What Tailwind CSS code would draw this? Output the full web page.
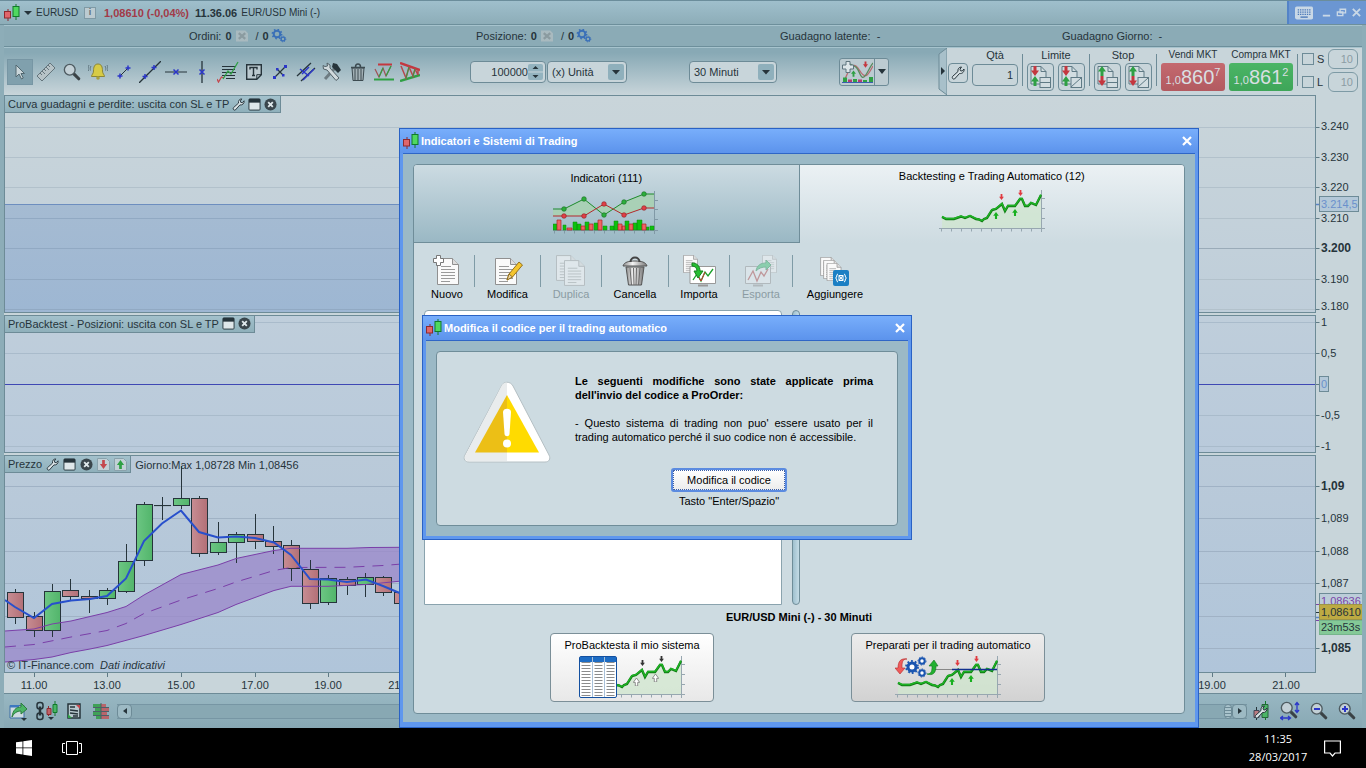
<!DOCTYPE html>
<html lang="it">
<head>
<meta charset="utf-8">
<title>EURUSD - ProOrder</title>
<script src="https://cdn.jsdelivr.net/npm/@tailwindcss/browser@4"></script>
</head>
<body class="h-screen overflow-hidden flex flex-col bg-black font-['Liberation_Sans',Arial,sans-serif] text-[11px] leading-[14px] text-[#26343b]">

<svg width="0" height="0" class="absolute" aria-hidden="true">
  <defs>
    <linearGradient id="gGreen" x1="0" x2="1"><stop offset="0" stop-color="#6cc683"/><stop offset="1" stop-color="#52b56b"/></linearGradient>
    <linearGradient id="gRed" x1="0" x2="1"><stop offset="0" stop-color="#c78d93"/><stop offset="1" stop-color="#b37077"/></linearGradient>
    <linearGradient id="gArea" x1="0" x2="0" y1="0" y2="1"><stop offset="0" stop-color="#a5bbd2"/><stop offset="1" stop-color="#9cb6d3"/></linearGradient>
    <linearGradient id="gCan" x1="0" x2="1"><stop offset="0" stop-color="#8a8a8a"/><stop offset=".4" stop-color="#f4f4f4"/><stop offset="1" stop-color="#777"/></linearGradient>
    <symbol id="candles" viewBox="0 0 16 18"><path d="M4 5v12" stroke="#8d2a30"/><rect x=".5" y="7.500" width="6" height="6.500" fill="#e0666b" stroke="#8d2a30"/><path d="M12 0v16" stroke="#117a2a"/><rect x="9" y="2.500" width="6" height="10" fill="#4fd85f" stroke="#117a2a"/></symbol>
    <symbol id="wrench" viewBox="0 0 14 14"><path d="M1.500 10.500 7 5.500C6.500 3 8 1 10.500 1L9 3.200l.5 1.600 1.800.2L13 3c.5 2.500-1.500 5-4.500 4.500L3.500 13C2 13.500.7 12 1.500 10.500z" fill="#d9e2e5" stroke="#26343b"/></symbol>
    <symbol id="win" viewBox="0 0 14 14"><rect x="1" y="1" width="12" height="12" rx="1" fill="#dfe7ea" stroke="#26343b"/><path d="M1 1h12v4H1z" fill="#26343b"/></symbol>
    <symbol id="closer" viewBox="0 0 14 14"><circle cx="7" cy="7" r="6.500" fill="#3a464c"/><path d="m4.500 4.500 5 5m0-5-5 5" stroke="#dfe8eb" stroke-width="2"/></symbol>
    <symbol id="gears" viewBox="0 0 15 14"><circle cx="5.500" cy="5" r="3.300" fill="none" stroke="#3a70b8" stroke-width="2"/><circle cx="5.500" cy="5" r="4.600" fill="none" stroke="#3a70b8" stroke-width="1.600" stroke-dasharray="1.600 2"/><circle cx="11.500" cy="10" r="1.900" fill="none" stroke="#3a70b8" stroke-width="1.400"/><circle cx="11.500" cy="10" r="2.800" fill="none" stroke="#3a70b8" stroke-dasharray="1.100 1.100"/></symbol>
    <symbol id="nox" viewBox="0 0 13 12"><path d="M0 0h10l3 3v9H0z" fill="#a9babf"/><path d="m3 3 7 6m0-6-7 6" stroke="#8b9ba0" stroke-width="2.500"/></symbol>
    <symbol id="aDown" viewBox="0 0 8 10"><path d="M2.500 0h3v4.500H8L4 10 0 4.500h2.500z"/></symbol>
    <symbol id="aUp" viewBox="0 0 8 10"><path d="M2.500 10h3V5.500H8L4 0 0 5.500h2.500z"/></symbol>
    <symbol id="doc" viewBox="0 0 22 27"><path d="M.5.500h15l6 6v20H.5z" fill="#fafafa" stroke="#909090"/><path d="M15.500.500v6h6" fill="#ddd" stroke="#909090"/><path d="M4 8.500h10M4 11.500h14M4 14.500h14M4 17.500h14M4 20.500h14M4 23.500h9" stroke="#9a9a9a"/></symbol>
    <symbol id="equity" viewBox="0 0 106 42">
      <path d="M3 27 7 29 15 29 22 26.500 26 28 31 26 37 29 40 29.500 43 31 45 29 48 28 53 20 57 19 63 14 66 21 69 16 76 16 81 9 83 9 86 16 89 16 92 13 97 15 102 5V38H3z" fill="#cfe5cd" opacity=".75"/>
      <path d="M0 38.500h106M102.500 0v42M2.500 38v3.500M12.500 38v3.500M22.500 38v3.500M32.500 38v3.500M42.500 38v3.500M52.500 38v3.500M62.500 38v3.500M72.500 38v3.500M82.500 38v3.500M92.500 38v3.500M102 8.500h4M102 18.500h4M102 28.500h4" stroke="#97a7b0" fill="none"/>
      <path d="M3 27 7 29 15 29 22 26.500 26 28 31 26 37 29 40 29.500 43 31 45 29 48 28 53 20 57 19 63 14 66 21 69 16 76 16 81 9 83 9 86 16 89 16 92 13 97 15 102 5" fill="none" stroke="#117a14" stroke-width="2.400"/>
      <path d="M3 26.500 7 28.500 15 28.500 22 26 26 27.500 31 25.500 37 28.500 43 30.500 48 27.500 53 19.500 57 18.500 63 13.500 66 20.500 69 15.500 76 15.500 81 8.500 83 8.500 86 15.500 89 15.500 92 12.500 97 14.500 102 4.500" fill="none" stroke="#1db324" stroke-width="1.400"/>
    </symbol>
    <symbol id="mag" viewBox="0 0 20 20"><path d="m11.500 11.500 6 6" stroke="#3a4246" stroke-width="3.500" stroke-linecap="round"/><circle cx="7.500" cy="7.500" r="6" fill="#c3d0d6" stroke="#4e5b61" stroke-width="1.500"/></symbol>
    <symbol id="pageL" viewBox="0 0 21 22"><path d="M1 .5h10l5 5V18H1z" fill="#d2dde1" stroke="#5f7a85"/><path d="M11 .5v5h5" fill="none" stroke="#5f7a85"/><rect x="10" y="11.500" width="10.500" height="10" fill="#d2dde1" stroke="#5f7a85"/></symbol>
  </defs>
</svg>

<main class="flex-1 min-h-0 flex flex-col bg-[#8dadb8] border-t border-[#6b8d9b]">

  <header class="h-6 shrink-0 flex items-center pl-1 bg-linear-to-b from-[#9fbfcc] to-[#8dadb8] border-b border-[#6d8f9b]">
    <svg class="w-4 h-[18px] mr-1" aria-hidden="true"><use href="#candles"/></svg>
    <svg class="w-2 h-1 mr-1 shrink-0" viewBox="0 0 8 4" aria-hidden="true"><path d="M0 0h8L4 4z" fill="#26343b"/></svg>
    <span class="text-[10px] w-12 shrink-0">EURUSD</span>
    <button class="w-3 h-3 mr-2 bg-[#bccbd1] border border-[#7f9aa5] text-[9px] leading-[9px] font-bold text-[#5d7079]" aria-label="Informazioni">i</button>
    <span class="font-bold text-[#a23a48] mr-1.5">1,08610 (-0,04%)</span>
    <span class="font-bold mr-1">11.36.06</span>
    <span class="text-[10px]">EUR/USD Mini (-)</span>
    <div class="ml-auto self-stretch w-[79px] flex items-center gap-1 pl-1.5 pr-1 bg-[#6b96d2] border-l-2 border-[#5383c8]">
      <svg class="w-5 h-[14px] mr-1" viewBox="0 0 20 14" role="img" aria-label="Tastiera"><rect width="20" height="14" rx="2" fill="#c9d8e6"/><path d="M3 3.500h14M3 6h14M3 8.500h14" stroke="#4b78b8" stroke-width="1.500" stroke-dasharray="1.500 1"/><path d="M6 11.500h8" stroke="#4b78b8" stroke-width="1.500"/></svg>
      <button class="w-3 h-3" aria-label="Riduci"><svg viewBox="0 0 12 12"><path d="M2 9.500h8" stroke="#c9d8e6" stroke-width="2"/></svg></button>
      <button class="w-3 h-3" aria-label="Ripristina"><svg viewBox="0 0 12 12"><path d="M4.500 2.500h6v4h-6zM1.500 5.500h6v4h-6z" fill="#6b96d2" stroke="#c9d8e6" stroke-width="1.500"/></svg></button>
      <button class="w-3 h-3" aria-label="Chiudi"><svg viewBox="0 0 12 12"><path d="m2 2 8 8m0-8-8 8" stroke="#c9d8e6" stroke-width="2"/></svg></button>
    </div>
  </header>

  <section class="h-[22px] shrink-0 mx-1 pl-[185px] grid grid-cols-[287fr_304fr_282fr_300fr] items-center bg-[#8babb6] border-t border-[#a6c3cd] border-b border-b-[#6d8f9b]">
    <div class="flex items-center">Ordini: <b class="ml-1 mr-1">0</b><svg class="w-3 h-3" aria-hidden="true"><use href="#nox"/></svg><span class="ml-2">/</span><b class="ml-1">0</b><svg class="w-4 h-[14px] ml-0.5" aria-hidden="true"><use href="#gears"/></svg></div>
    <div class="flex items-center">Posizione: <b class="ml-1 mr-1">0</b><svg class="w-3 h-3" aria-hidden="true"><use href="#nox"/></svg><span class="ml-2">/</span><b class="ml-1">0</b><svg class="w-4 h-[14px] ml-0.5" aria-hidden="true"><use href="#gears"/></svg></div>
    <div>Guadagno latente:&nbsp; -</div>
    <div>Guadagno Giorno:&nbsp; -</div>
  </section>

  <section class="h-12 shrink-0 mx-1 flex items-center pl-[3px] bg-linear-to-b from-[#88a9b5] from-10% to-[#c8d5da] border-t border-[#a6c3cd]">
    <div class="flex">
      <button class="w-[26px] h-[26px] grid place-items-center bg-[#80a0ad] border border-[#7796a4]" aria-label="Puntatore"><svg width="12" height="18" viewBox="0 0 12 18"><path d="M2 2v12l3-3 2.500 5 1.800-1L7 10.500h3.500z" fill="#cad6da" stroke="#526870"/></svg></button>
      <button class="w-[26px] h-[26px] grid place-items-center" aria-label="Righello"><svg width="20" height="20" viewBox="0 0 20 20"><path d="m1 14 13-13 5 5L6 19z" fill="#b7c3c7" stroke="#64757c"/><path d="m4 11 2 2m0-4 3 3m-1-5 2 2m0-4 3 3m-1-5 2 2" stroke="#64757c"/></svg></button>
      <button class="w-[26px] h-[26px] grid place-items-center" aria-label="Zoom"><svg width="18" height="18"><use href="#mag"/></svg></button>
      <button class="w-[26px] h-[26px] grid place-items-center" aria-label="Allarme"><svg width="20" height="18" viewBox="0 0 20 18"><path d="M10 1c3.500 0 4.500 3 4.500 7 0 3 2 3.500 2 5.500H3.500c0-2 2-2.500 2-5.500 0-4 1-7 4.500-7z" fill="#d7cb45" stroke="#8c8636"/><circle cx="10" cy="15" r="1.800" fill="#a8a03c"/><path d="M3 3C2 4.500 2 6 2.500 7.500M1 2C-.2 4 0 6.500.5 8M17 3c1 1.500 1 3 .5 4.500M19 2c1.200 2 1 4.500.5 6" fill="none" stroke="#5f757e"/></svg></button>
      <button class="w-[26px] h-[26px] grid place-items-center" aria-label="Segmento"><svg width="14" height="14" viewBox="0 0 14 14"><path d="M3 11 11 3" stroke="#26343b"/><path d="M3 8.500v5M.5 11h5M11 .5v5M8.500 3h5" stroke="#2b36c9" stroke-width="1.500"/></svg></button>
      <button class="w-[26px] h-[26px] grid place-items-center" aria-label="Retta"><svg width="22" height="22" viewBox="0 0 22 22"><path d="M0 22 22 0" stroke="#26343b" stroke-width="1.300"/><path d="M6 13v5M3.500 15.500h5M15 4v5M12.500 6.500h5" stroke="#2b36c9" stroke-width="1.500"/></svg></button>
      <button class="w-[26px] h-[26px] grid place-items-center" aria-label="Orizzontale"><svg width="22" height="8" viewBox="0 0 22 8"><path d="M0 4h22" stroke="#26343b"/><path d="m8.500 1.500 5 5m0-5-5 5" stroke="#2b36c9" stroke-width="1.500"/></svg></button>
      <button class="w-[26px] h-[26px] grid place-items-center" aria-label="Verticale"><svg width="8" height="22" viewBox="0 0 8 22"><path d="M4 0v22" stroke="#26343b" stroke-width="1.300"/><path d="m1.500 8.500 5 5m0-5-5 5" stroke="#2b36c9" stroke-width="1.500"/></svg></button>
      <button class="w-[26px] h-[26px] grid place-items-center" aria-label="Fibonacci"><svg width="22" height="22" viewBox="0 0 22 22"><path d="M5 5.500h14M5 8.500h13M5 11.500h14M5 14.500h13M9 17.500h9" stroke="#26343b"/><path d="M0 18l1.500 3 3-5 2.500 1" fill="none" stroke="#c4474d" stroke-width="1.300"/><path d="M6 18l5-8 3 3 7-12" fill="none" stroke="#2fa044" stroke-width="1.300"/></svg></button>
      <button class="w-[26px] h-[26px] grid place-items-center" aria-label="Testo"><svg width="16" height="16" viewBox="0 0 16 16"><path d="M.7.700h14.600v10l-4.500 4.600H.7z" fill="#bccad0" stroke="#26343b" stroke-width="1.400"/><path d="M10.800 15v-4.300H15" fill="none" stroke="#26343b"/><path d="M4 5.500v-2h7v2M7.500 3.500v8M6 11.500h3" fill="none" stroke="#26343b" stroke-width="1.400"/></svg></button>
      <button class="w-[26px] h-[26px] grid place-items-center" aria-label="Sposta"><svg width="14" height="14" viewBox="0 0 14 14"><path d="M2 12 12 2M4 4l6 6" stroke="#26343b" stroke-width="1.200"/><path d="M0 11h3v3H0zM11 0h3v3h-3zM9 9h2.500v2.500H9zM3 3h2.500v2.500H3z" fill="#2b36c9"/></svg></button>
      <button class="w-[26px] h-[26px] grid place-items-center" aria-label="Parallele"><svg width="20" height="20" viewBox="0 0 20 20"><path d="M1 14 15 1M5 19 19 6" stroke="#26343b" stroke-width="1.300"/><path d="m4 7 9 7M13 5l-7 7M7 18l11-11" stroke="#2b36c9" stroke-width="1.500"/></svg></button>
      <button class="w-[26px] h-[26px] grid place-items-center" aria-label="Strumenti"><svg width="20" height="20" viewBox="0 0 20 20"><path d="m3 17 10-11" stroke="#6e7c82" stroke-width="3"/><path d="m11 1 4 1 4 6-3 3-6-6z" fill="#26343b"/><path d="M5 1 5.500 4 3 4.500 1 3.500 1.500 7 5 8l9 10.500 3-2.500L8 6V3z" fill="#d0d9dc" stroke="#526168"/></svg></button>
      <button class="w-[26px] h-[26px] grid place-items-center" aria-label="Elimina"><svg width="16" height="18" viewBox="0 0 16 18"><path d="M2 5h12l-1 12.500H3z" fill="#a3b1b6" stroke="#3d4b51"/><path d="M5 6v11M8 6v11M11 6v11" stroke="#3d4b51"/><path d="M1 4.500h14M5.500 4c0-4 5-4 5 0" fill="none" stroke="#3d4b51" stroke-width="1.500"/></svg></button>
      <button class="w-[26px] h-[26px] grid place-items-center" aria-label="Supporti"><svg width="20" height="18" viewBox="0 0 20 18"><path d="M4 1.500h14" stroke="#c4373f" stroke-width="2"/><path d="M0 16.500h20" stroke="#2fa044" stroke-width="2"/><path d="m1 6 4 8 4-9 3 8 5-10" fill="none" stroke="#a05055" stroke-width="1.200"/><path d="m5 14 4-9M12 13l5-10" stroke="#2fa044" stroke-width="1.200"/></svg></button>
      <button class="w-[26px] h-[26px] grid place-items-center" aria-label="Triangolo"><svg width="20" height="20" viewBox="0 0 20 20"><path d="m0 1 20 7" stroke="#c4373f" stroke-width="2.500"/><path d="m0 19 20-6" stroke="#2fa044" stroke-width="2.500"/><path d="m1 4 5 12 3-11 4 9 2-7 3 6V8" fill="none" stroke="#b4484d" stroke-width="1.500"/><path d="m6 16 3-11M13 14l2-7" stroke="#2fa044"/></svg></button>
    </div>

    <div class="ml-[47px] w-[76px] h-[22px] flex items-center rounded-sm border border-[#6d8b97] bg-[#c8d5da] pr-0.5">
      <input class="w-full min-w-0 bg-transparent text-right outline-none" value="100000" aria-label="Quantità">
      <svg class="w-[15px] h-4 shrink-0" viewBox="0 0 15 16" aria-hidden="true"><rect width="15" height="16" rx="2" fill="#93b3bf"/><path d="M0 8h15" stroke="#c8d5da"/><path d="M4.500 5h6L7.500 2zM4.500 11h6l-3 3z" fill="#26343b"/></svg>
    </div>
    <div class="w-20 h-[22px] flex items-center rounded-sm border border-[#6d8b97] bg-[#c8d5da] pl-1 pr-0.5 ml-px">
      <select class="appearance-none w-full min-w-0 bg-transparent outline-none" aria-label="Unità"><option>(x) Unità</option></select>
      <svg class="w-4 h-4 shrink-0 pointer-events-none" viewBox="0 0 16 16" aria-hidden="true"><rect width="16" height="16" rx="2" fill="#8fb0bc"/><path d="M4 6h8l-4 4.500z" fill="#26343b"/></svg>
    </div>
    <div class="ml-[62px] w-[88px] h-[22px] flex items-center rounded-sm border border-[#6d8b97] bg-[#c8d5da] pl-1 pr-0.5">
      <select class="appearance-none w-full min-w-0 bg-transparent outline-none" aria-label="Intervallo"><option>30 Minuti</option></select>
      <svg class="w-4 h-4 shrink-0 pointer-events-none" viewBox="0 0 16 16" aria-hidden="true"><rect width="16" height="16" rx="2" fill="#8fb0bc"/><path d="M4 6h8l-4 4.500z" fill="#26343b"/></svg>
    </div>
    <div class="ml-[62px] h-7 flex rounded-[3px] border border-[#6d8b97] bg-[#bccbd1]">
      <button class="w-[35px] grid place-items-center border-r border-[#6d8b97]" aria-label="Indicatori"><svg width="31" height="22" viewBox="0 0 31 22"><path d="M3 18c6-14 9-18 15-8s9 2 13-5" fill="none" stroke="#b96a70" stroke-width="1.300"/><path d="M8 3c4 3 6 0 10 10s8-5 13-11" fill="none" stroke="#5b8a5e" stroke-width="1.300"/><path d="M4 .5h4V4h3.500v4H8v3.500H4V8H.5V4H4z" fill="#dde6e9" stroke="#5f757e"/><path d="M1 16.500h4V21H1zM11 18h4v3h-4zM21 19h4v2h-4zM27 16h4v5h-4z" fill="#2fa044"/><path d="M6 18.500h4V21H6zM16 18.500h4V21h-4z" fill="#b33f73"/><path d="M0 21.500h31" stroke="#3b5fae"/><use href="#aUp" x="9" y="9" width="5" height="7" fill="#2fa044"/><use href="#aDown" x="21" y="0" width="5" height="7" fill="#c4373f"/></svg></button>
      <button class="w-[13px] grid place-items-center" aria-label="Altri indicatori"><svg width="8" height="5"><path d="M0 0h8L4 5z" fill="#26343b"/></svg></button>
    </div>

    <div class="ml-auto h-full flex">
      <svg class="w-[9px] h-full shrink-0" viewBox="0 0 9 47" preserveAspectRatio="none" aria-hidden="true"><path d="M9 0 1 6v35l8 6z" fill="#a8c0ca" stroke="#6d8b97"/><path d="m3 19 4 4-4 4z" fill="#26343b"/></svg>
      <div class="h-full flex gap-1 pl-px pr-1 bg-[#c8d5da]">
        <button class="w-5 h-5 mt-[15px] grid place-items-center rounded-sm border border-[#6d8b97]" aria-label="Impostazioni"><svg width="14" height="14"><use href="#wrench"/></svg></button>
        <label class="flex flex-col items-center">Qtà<input class="w-[46px] h-[22px] mt-0.5 px-1 rounded-sm border border-[#6d8b97] text-right" value="1"></label>
        <div class="w-px h-8 mt-1.5 bg-[#6d8b97]"></div>
        <div class="flex flex-col items-center"><span>Limite</span>
          <div class="flex gap-1">
            <button class="w-[27px] h-7 mt-px grid place-items-center rounded-sm border border-[#6d8b97]" aria-label="Limite singolo"><svg width="21" height="22"><use href="#pageL"/><path d="M10 16.500h10" stroke="#5f7a85"/><use href="#aDown" x="1" y="0" width="8" height="10" fill="#c4373f"/><use href="#aUp" x="1" y="10" width="8" height="10" fill="#2fa044"/></svg></button>
            <button class="w-[27px] h-7 mt-px grid place-items-center rounded-sm border border-[#6d8b97]" aria-label="Limite ordine"><svg width="21" height="22"><use href="#pageL"/><path d="m10 21 10-9" stroke="#5f7a85"/><use href="#aDown" x="1" y="0" width="8" height="10" fill="#c4373f"/><use href="#aUp" x="1" y="10" width="8" height="10" fill="#2fa044"/></svg></button>
          </div></div>
        <div class="w-px h-8 mt-1.5 bg-[#6d8b97]"></div>
        <div class="flex flex-col items-center"><span>Stop</span>
          <div class="flex gap-1">
            <button class="w-[27px] h-7 mt-px grid place-items-center rounded-sm border border-[#6d8b97]" aria-label="Stop singolo"><svg width="21" height="22"><use href="#pageL"/><path d="M10 16.500h10" stroke="#5f7a85"/><use href="#aUp" x="1" y="0" width="8" height="10" fill="#2fa044"/><use href="#aDown" x="1" y="10" width="8" height="10" fill="#c4373f"/></svg></button>
            <button class="w-[27px] h-7 mt-px grid place-items-center rounded-sm border border-[#6d8b97]" aria-label="Stop ordine"><svg width="21" height="22"><use href="#pageL"/><path d="m10 21 10-9" stroke="#5f7a85"/><use href="#aUp" x="1" y="0" width="8" height="10" fill="#2fa044"/><use href="#aDown" x="1" y="10" width="8" height="10" fill="#c4373f"/></svg></button>
          </div></div>
        <div class="w-px h-8 mt-1.5 bg-[#6d8b97]"></div>
        <div class="w-16 flex flex-col items-center whitespace-nowrap"><span class="text-[10px]">Vendi MKT</span>
          <button class="w-full h-7 mt-px flex justify-center items-end pb-1 rounded-[3px] bg-linear-to-b from-[#c4696f] to-[#b25a60] text-[#d9dfe2]"><span>1,0</span><span class="text-[20px] leading-5">860</span><span class="self-start pt-0.5">7</span></button></div>
        <div class="w-16 flex flex-col items-center whitespace-nowrap"><span class="text-[10px]">Compra MKT</span>
          <button class="w-full h-7 mt-px flex justify-center items-end pb-1 rounded-[3px] bg-linear-to-b from-[#4bb566] to-[#3ea558] text-[#d9dfe2]"><span>1,0</span><span class="text-[20px] leading-5">861</span><span class="self-start pt-0.5">2</span></button></div>
        <div class="w-px h-8 mt-1.5 bg-[#6d8b97]"></div>
        <div class="flex flex-col gap-[3px] pt-px">
          <div class="flex items-center gap-[3px]"><input id="stopOn" type="checkbox" class="appearance-none w-3 h-3 border border-[#6d8b97]"><label for="stopOn" class="w-2">S</label><input class="w-[30px] h-5 px-1 rounded-md border border-[#7d9aa5] text-right text-[#8b9ca4]" value="10" aria-label="Distanza stop"></div>
          <div class="flex items-center gap-[3px]"><input id="limOn" type="checkbox" class="appearance-none w-3 h-3 border border-[#6d8b97]"><label for="limOn" class="w-2">L</label><input class="w-[30px] h-5 px-1 rounded-md border border-[#7d9aa5] text-right text-[#8b9ca4]" value="10" aria-label="Distanza limite"></div>
        </div>
      </div>
    </div>
  </section>

  <section class="flex-1 min-h-0 mx-1 flex bg-[#c8d5da]">
    <div class="flex-1 min-w-0 flex flex-col gap-0.5">
      <div class="relative flex-[218] min-h-0 border border-[#6d8b97] bg-linear-to-b from-[#c9d5da] to-[#bfceda] overflow-hidden">
        <svg class="absolute inset-0 w-full h-full" aria-label="Curva guadagni">
          <path d="M0 31.500h1400M0 61.500h1400M0 91.500h1400M0 122.500h1400M0 183.500h1400M0 213.500h1400" stroke="#b2c1cb"/><path d="M0 152.500h1400" stroke="#9aabb8"/>
          <rect y="108" width="420" height="130" fill="url(#gArea)"/><path d="M0 108.500h420" stroke="#6d8ebf"/>
          <path d="M0 122.500h420M0 152.500h420M0 183.500h420M0 213.500h420" stroke="#91a9c3"/>
        </svg>
        <div class="relative w-fit h-[17px] flex items-center gap-[3px] pl-[3px] pr-[3px] bg-linear-to-b from-[#a3c1cc] to-[#8fb0bb] border-r border-b border-[#6d8b97]">Curva guadagni e perdite: uscita con SL e TP
          <svg class="w-[13px] h-[13px]"><use href="#wrench"/></svg><svg class="w-[13px] h-[13px]"><use href="#win"/></svg><svg class="w-[13px] h-[13px]"><use href="#closer"/></svg></div>
      </div>
      <div class="relative flex-[138] min-h-0 border border-[#6d8b97] bg-linear-to-b from-[#bfcedb] to-[#b9cadb] overflow-hidden">
        <svg class="absolute inset-0 w-full h-full" aria-label="Posizioni"><path d="M0 6.500h1400M0 37.500h1400M0 99.500h1400M0 130.500h1400" stroke="#a9bbcb"/><path d="M0 68.500h1400" stroke="#3f48b4"/></svg>
        <div class="relative w-fit h-[17px] flex items-center gap-[3px] pl-[3px] pr-[3px] bg-linear-to-b from-[#a3c1cc] to-[#8fb0bb] border-r border-b border-[#6d8b97]">ProBacktest - Posizioni: uscita con SL e TP
          <svg class="w-[13px] h-[13px]"><use href="#win"/></svg><svg class="w-[13px] h-[13px]"><use href="#closer"/></svg></div>
      </div>
      <div class="relative flex-[218] min-h-0 border border-[#6d8b97] bg-linear-to-b from-[#bacad9] to-[#b0c5da] overflow-hidden">
        <svg class="absolute inset-0 w-full h-full" aria-label="Prezzo">
          <path d="M0 30.500h1400M0 62.500h1400M0 95.500h1400M0 127.500h1400M0 160.500h1400M0 192.500h1400" stroke="#a0b2c5"/>
          <g transform="translate(-5 -456)" id="price"></g>
        </svg>
        <div class="relative flex items-center h-[17px]">
          <div class="w-fit h-[17px] flex items-center gap-1 pl-[3px] pr-[3px] bg-linear-to-b from-[#a3c1cc] to-[#8fb0bb] border-r border-b border-[#6d8b97]">Prezzo
          <svg class="w-[13px] h-[13px]"><use href="#wrench"/></svg><svg class="w-[13px] h-[13px]"><use href="#win"/></svg><svg class="w-[13px] h-[13px]"><use href="#closer"/></svg>
          <svg class="w-[13px] h-[13px]" viewBox="0 0 13 13"><path d="M.5.500h9l3 3v9H.5z" fill="#c2d0d6" stroke="#8aa2ac"/><use href="#aDown" x="2.500" y="2" width="8" height="9" fill="#c4474d"/></svg>
          <svg class="w-[13px] h-[13px]" viewBox="0 0 13 13"><path d="M.5.500h9l3 3v9H.5z" fill="#c2d0d6" stroke="#8aa2ac"/><use href="#aUp" x="2.500" y="2" width="8" height="9" fill="#2fa044"/></svg></div>
          <span class="ml-1">Giorno:Max 1,08728 Min 1,08456</span>
        </div>
        <div class="absolute left-0.5 bottom-0">© IT-Finance.com&nbsp; <i>Dati indicativi</i></div>
      </div>
    </div>
    <svg class="w-[46px] shrink-0" height="578" aria-label="Scala dei valori" font-size="11" fill="#26343b">
      <path d="M0 32.500h3.500M0 62.500h3.500M0 92.500h3.500M0 123.500h3.500M0 153.500h3.500M0 184.500h3.500M0 214.500h3.500M0 227.500h3.500M0 258.500h3.500M0 289.500h3.500M0 320.500h3.500M0 351.500h3.500M0 391.500h3.500M0 423.500h3.500M0 456.500h3.500M0 488.500h3.500M0 553.500h3.500" stroke="#5f7a85"/>
      <path d="M0 109.500h3.500M0 522.500h3.500" stroke="#5b84c4" stroke-width="1.500"/><path d="M0 509.500h3.500M0 525.500h3.500" stroke="#7a45a8"/><path d="M0 517.500h3.500" stroke="#26343b"/>
      <text x="5" y="35">3.240</text><text x="5" y="66">3.230</text><text x="5" y="96">3.220</text><text x="5" y="127">3.210</text>
      <text x="5" y="157" font-size="12" font-weight="bold">3.200</text><text x="5" y="188">3.190</text><text x="5" y="215">3.180</text>
      <rect x="3.500" y="101.500" width="39" height="15" fill="#b3c8d8" stroke="#6d8b97"/><text x="5" y="113" fill="#6a90cc">3.214,5</text>
      <text x="5" y="231">1</text><text x="5" y="262">0,5</text>
      <rect x="3.500" y="281.500" width="9" height="15" fill="#b3c8d8" stroke="#6d8b97"/><text x="5" y="293" fill="#6a90cc">0</text>
      <text x="5" y="324">-0,5</text><text x="5" y="355">-1</text>
      <text x="5" y="395" font-size="12" font-weight="bold">1,09</text><text x="5" y="427">1,089</text><text x="5" y="460">1,088</text><text x="5" y="492">1,087</text>
      <rect x="3.500" y="498.500" width="43" height="14" fill="#bccdd9" stroke="#6d8b97"/><text x="5" y="510" fill="#7a45a8">1,08636</text>
      <rect x="3.500" y="509.500" width="43" height="15" fill="#bdaa42" stroke="#9c9547"/><text x="5" y="521">1,08610</text>
      <rect x="3.500" y="525.500" width="43" height="14" fill="#84c997" stroke="#76b48c"/><text x="5" y="536">23m53s</text>
      <text x="5" y="557" font-size="12" font-weight="bold">1,085</text>
    </svg>
  </section>

  <div class="h-5 shrink-0 mx-1 bg-[#c8d5da]">
    <svg class="h-5 w-full" aria-label="Scala dei tempi" font-size="11" fill="#26343b" text-anchor="middle">
      <path d="M30.500 0v4M103.500 0v4M177.500 0v4M251.500 0v4M324.500 0v4M1208.500 0v4M1281.500 0v4" stroke="#5f7a85"/>
      <text x="30" y="16">11.00</text><text x="103" y="16">13.00</text><text x="177" y="16">15.00</text><text x="251" y="16">17.00</text><text x="324" y="16">19.00</text><text x="398" y="16">21.00</text><text x="1208" y="16">19.00</text><text x="1282" y="16">21.00</text>
    </svg>
  </div>

  <footer class="h-[35px] shrink-0 mx-1 flex items-center bg-linear-to-b from-[#98b7c2] to-[#88a8b4] border-t border-[#6d8b97]">
    <button class="ml-[5px] mr-[7px]" aria-label="Condividi"><svg width="19" height="20" viewBox="0 0 19 20"><path d="M1 4.500h14V17H1z" fill="#cfdbe0" stroke="#3d6ea5"/><path d="M1 4h9v2.500H1z" fill="#3d78c0"/><path d="M3 16c1-7 4-10 9-10V2l6 6-6 5v-3c-4 0-7 2-9 6z" fill="#4bb566" stroke="#2c7a3e"/><path d="M12 17h6l-3 3z" fill="#26343b"/></svg></button>
    <button class="mr-2" aria-label="Collega"><svg width="24" height="20" viewBox="0 0 24 20"><rect x="2" y="1.500" width="6" height="6.500" rx="2.500" fill="none" stroke="#26343b" stroke-width="1.500"/><rect x="2" y="12" width="6" height="6.500" rx="2.500" fill="none" stroke="#26343b" stroke-width="1.500"/><path d="M5 5.500v9" stroke="#26343b" stroke-width="2.500"/><path d="M13.500 5v10" stroke="#8d2a30"/><path d="M12 7.500h4v6h-4z" fill="#c06268" stroke="#8d2a30"/><path d="M20 0v15" stroke="#117a2a"/><path d="M18 3.500h4v8h-4z" fill="#4bb566" stroke="#117a2a"/><path d="M13 16h6l-3 3z" fill="#26343b"/></svg></button>
    <button class="mr-3" aria-label="Lista"><svg width="14" height="16" viewBox="0 0 14 16"><path d="M1 1h12v14H1z" fill="#b8c8ce" stroke="#26343b" stroke-width="1.500"/><path d="M3 4h5M3 7l8 1M3 10l8 1M6 13h5" stroke="#26343b" stroke-width="1.500"/><path d="M9 2h4v4z" fill="#c4474d"/><path d="M1 11v4h4z" fill="#2fa044"/></svg></button>
    <button class="mr-2" aria-label="Book"><svg width="16" height="16" viewBox="0 0 16 16"><path d="M0 1h8v3H0zM2 4h6v4H2zM0 8h8v4H0zM3 12h5v4H3z" fill="#3fa157"/><path d="M8 1h5v3H8zM8 4h8v4H8zM8 8h6v4H8zM8 12h8v4H8z" fill="#b9656b"/><path d="M0 4.500h16M0 8.500h16M0 12.500h16M8 0v16" stroke="#4c6069"/></svg></button>
    <div class="flex-1 h-[15px] flex items-center justify-between bg-[#88a8b3] border-y border-[#7796a4]">
      <button class="w-[15px] h-[15px] grid place-items-center rounded-sm border border-[#6d8b97] bg-[#9dbac4]" aria-label="Scorri a sinistra"><svg width="4" height="6"><path d="M4 0v6L0 3z" fill="#26343b"/></svg></button>
      <div class="flex"><div class="w-2 h-[15px] rounded-sm border border-[#6d8b97] bg-[repeating-linear-gradient(#a9c3cc_0_2px,#6d8b97_2px_3px)]"></div>
      <button class="w-[15px] h-[15px] grid place-items-center rounded-sm border border-[#6d8b97] bg-[#9dbac4]" aria-label="Scorri a destra"><svg width="4" height="6"><path d="M0 0v6l4-3z" fill="#26343b"/></svg></button></div>
    </div>
    <button class="ml-1.5 mr-2.5" aria-label="Opzioni grafico"><svg width="17" height="20" viewBox="0 0 17 20"><path d="M3.500 6v13" stroke="#26343b"/><path d="M1 9.500h5v7H1z" fill="#b97a7f" stroke="#445"/><path d="M12.500 0v19" stroke="#117a2a"/><path d="M9 3.500h6v13H9z" fill="#4bb566" stroke="#26643a"/><use href="#wrench" x="1" y="4" width="14" height="14"/></svg></button>
    <button class="mr-2.5" aria-label="Adatta scala"><svg width="20" height="20" viewBox="0 0 20 20"><use href="#mag" x="0" y="0" width="18" height="18"/><path d="M17 2v9m-2-7 2-2.500L19 4m-4 5 2 2.500L19 9M1 17h9M3 15l-2.500 2L3 19m5-4 2.500 2L8 19" fill="none" stroke="#2b36c9" stroke-width="1.300"/></svg></button>
    <button class="mr-2.5" aria-label="Riduci zoom"><svg width="18" height="18" viewBox="0 0 18 18"><use href="#mag"/><path d="M4 7h6" stroke="#2b36c9" stroke-width="2"/></svg></button>
    <button class="mr-1.5" aria-label="Aumenta zoom"><svg width="18" height="18" viewBox="0 0 18 18"><use href="#mag"/><path d="M4 7h6M7 4v6" stroke="#2b36c9" stroke-width="2"/></svg></button>
  </footer>
</main>

<footer class="h-10 shrink-0 flex items-center bg-black text-white font-['Open_Sans','Noto_Sans',sans-serif]">
  <button class="ml-4" aria-label="Start"><svg width="16" height="16" viewBox="0 0 16 16" fill="#fff"><path d="M0 2.300 6.500 1.400v6.100H0zM7.300 1.300 16 0v7.500H7.300zM0 8.300h6.500v6.200L0 13.600zM7.300 8.300H16V16l-8.700-1.300z"/></svg></button>
  <button class="ml-[30px]" aria-label="Visualizzazione attività"><svg width="20" height="15" viewBox="0 0 20 15" fill="none" stroke="#fff"><path d="M4.500.500h11v13h-11zM3 2.500H.5v9H3M17 2.500h2.500v9H17"/></svg></button>
  <div class="ml-auto w-[60px] text-center leading-[18px]"><div>11:35</div><div>28/03/2017</div></div>
  <button class="ml-4 mr-[25px]" aria-label="Notifiche"><svg width="17" height="17" viewBox="0 0 17 17" fill="none" stroke="#fff" stroke-width="1.200"><path d="M.6 1h15.800v12H11l-2.500 3L6 13H.6z"/></svg></button>
</footer>

<section role="dialog" aria-labelledby="dlg1" class="absolute left-[399px] top-32 w-[800px] h-[600px] flex flex-col bg-[#5f97ee] border border-[#2a62c4] text-black">
  <header class="h-6 shrink-0 flex items-center pl-[3px] pr-1.5 bg-linear-to-b from-[#78aefb] to-[#5c93ec] text-white">
    <svg class="w-4 h-[18px] mr-0.5" aria-hidden="true"><use href="#candles"/></svg>
    <h1 id="dlg1" class="font-bold">Indicatori e Sistemi di Trading</h1>
    <button class="ml-auto w-[10px] h-[10px]" aria-label="Chiudi"><svg viewBox="0 0 10 10"><path d="m1 1 8 8m0-8L1 9" stroke="#fff" stroke-width="2.200"/></svg></button>
  </header>
  <div class="flex-1 min-h-0 mx-[3px] mb-[5px] px-[10px] pt-[10px] pb-2 bg-[#9bb9c6] border-t border-[#2f66c6] flex">
    <div class="flex-1 flex flex-col rounded border border-[#6f8d99] bg-[#cddbe1] overflow-hidden">
      <div class="flex h-[78px] shrink-0 text-center" role="tablist">
        <button role="tab" class="flex-1 flex flex-col items-center pt-1.5 bg-linear-to-b from-[#ccdbe2] to-[#9ab8c4] border-r border-b border-[#6f8d99]">Indicatori (111)
          <svg class="mt-1.5" width="106" height="44" viewBox="0 0 106 44"><path d="M0 19 11 18 31 8 51 24 71 11 91 3 101 3V17H91L71 24 51 13 31 25H0z" fill="#a9d0b6"/><path d="M0 39.500h105M101.500 0v43M1.500 39v3.500M11.500 39v3.500M21.500 39v3.500M31.500 39v3.500M41.500 39v3.500M51.500 39v3.500M61.500 39v3.500M71.500 39v3.500M81.500 39v3.500M91.500 39v3.500M101 9.500h4M101 18.500h4M101 28.500h4" stroke="#8199a6"/>
          <path d="M0 33h4v6H0zM10 34h3v5h-3zM20 31h4v8h-4zM24 33h4v6h-4zM32 31h4v8h-4zM41 32h4v7h-4zM50 35h4v4h-4zM57 35h4v4h-4zM61 30h4v9h-4zM72 30h4v9h-4zM80 32h4v7h-4zM84 29h5v10h-5zM93 36h3v3h-3zM97 35h4v4h-4z" fill="#0dc20d" stroke="#128a12" stroke-width=".5"/><path d="M4 29h4v10H4zM14 37h5v2h-5zM28 35h4v4h-4zM36 33h4v6h-4zM45 29h4v10h-4zM65 33h4v6h-4zM69 35h3v4h-3zM76 33h4v6h-4zM89 33h4v6h-4z" fill="#f06464" stroke="#b02424" stroke-width=".7"/>
          <g fill="none"><path d="M0 18 11 18 31 8 51 24 71 11 91 3 101 3" stroke="#1d8a2a"/><path d="M0 25 31 25 51 13 71 24 91 17 101 17" stroke="#b3282c"/></g>
          <g fill="#2dae3c" stroke="#146b1e" stroke-width=".6"><circle cx="11" cy="18" r="2.300"/><circle cx="31" cy="8" r="2.300"/><circle cx="51" cy="24" r="2.300"/><circle cx="71" cy="11" r="2.300"/><circle cx="91" cy="3" r="2.300"/></g><g fill="#e04046" stroke="#8c1c20" stroke-width=".6"><circle cx="11" cy="25" r="2.300"/><circle cx="31" cy="25" r="2.300"/><circle cx="51" cy="13" r="2.300"/><circle cx="71" cy="24" r="2.300"/><circle cx="91" cy="17" r="2.300"/></g></svg>
        </button>
        <button role="tab" aria-selected="true" class="flex-1 flex flex-col items-center pt-1 bg-linear-to-b from-[#ebf1f4] to-[#cddbe1]">Backtesting e Trading Automatico (12)
          <svg class="mt-[7px]" width="106" height="42"><use href="#equity"/><g fill="#e03a40"><use href="#aDown" x="60" y="4" width="5" height="6"/><use href="#aDown" x="79" y="0" width="5" height="6"/></g><g fill="#18b020"><use href="#aUp" x="54" y="22" width="6" height="7"/><use href="#aUp" x="73" y="19" width="6" height="7"/></g></svg>
        </button>
      </div>
      <div class="flex pt-3 pl-[6px] h-[67px] shrink-0">
        <button class="w-[54px] flex flex-col items-center"><svg width="28" height="32" viewBox="0 0 28 32"><use href="#doc" x="4" y="3" width="22" height="27"/><path d="M3.500.500h4v3h3v4h-3v3h-4v-3h-3v-4h3z" fill="#fff" stroke="#777"/></svg>Nuovo</button>
        <div class="w-px h-8 bg-[#7f9ba6]"></div>
        <button class="w-[65px] flex flex-col items-center"><svg width="30" height="32" viewBox="0 0 30 32"><use href="#doc" x="2" y="3" width="22" height="27"/><path d="m14 25 2-6L26 7l3.500 3-10 12z" fill="#f4c52e" stroke="#94701c"/><path d="m14 25 2-6 3.500 3z" fill="#e8d5a8" stroke="#94701c"/></svg>Modifica</button>
        <div class="w-px h-8 bg-[#7f9ba6]"></div>
        <button disabled class="w-[60px] flex flex-col items-center text-[#8b9ba3]"><svg class="opacity-40" width="30" height="32"><use href="#doc" x="0" y="0" width="21" height="26"/><use href="#doc" x="8" y="5" width="21" height="26"/></svg>Duplica</button>
        <div class="w-px h-8 bg-[#7f9ba6]"></div>
        <button class="w-[66px] flex flex-col items-center"><svg width="26" height="32" viewBox="0 0 26 32"><path d="M4 12h18l-2.500 18h-13z" fill="url(#gCan)" stroke="#555"/><path d="m8 13 1.500 17M11.500 13l.5 17M14.500 13l-.5 17M18 13l-1.500 17" stroke="#6a6a6a"/><path d="M1 11c1-4 6-5 12-5s11 1 12 5z" fill="url(#gCan)" stroke="#555"/><path d="M8.500 7c0-6 9-6 9 0" fill="none" stroke="#444" stroke-width="2"/></svg>Cancella</button>
        <div class="w-px h-8 bg-[#7f9ba6]"></div>
        <button class="w-[60px] flex flex-col items-center"><svg width="33" height="32" viewBox="0 0 33 32"><use href="#doc" x="0" y="0" width="15" height="18"/><path d="M7 11.500h25.500v17H7z" fill="#fff" stroke="#999"/><path d="M15 30.500h10" stroke="#999" stroke-width="2"/><path d="m10 25 4-6 4 7 4-9 3 4 5-7" fill="none" stroke="#18a028" stroke-width="1.300"/><path d="m14 19 4 7 4-9" fill="none" stroke="#c33" /><path d="M9 8c5 0 8 3 8 8h3l-5 7-4-7h3c0-3-2-5-5-5z" fill="#27bd32" stroke="#13831c"/></svg>Importa</button>
        <div class="w-px h-8 bg-[#7f9ba6]"></div>
        <button disabled class="w-[62px] flex flex-col items-center text-[#8b9ba3]"><svg class="opacity-40" width="32" height="32" viewBox="0 0 32 32"><use href="#doc" x="17" y="0" width="15" height="18"/><path d="M.5 11.500h25v17H.5z" fill="#eef3f5" stroke="#888"/><path d="M8 30.500h10" stroke="#888" stroke-width="2"/><path d="m3 25 5-9 4 10 4-9 3 4 4-7" fill="none" stroke="#a33" stroke-width="1.300"/><path d="M11 16c1-6 5-8 10-8V5l5 5-5 5v-3c-4 0-7 1-10 4z" fill="#27bd62" stroke="#138343"/></svg>Esporta</button>
        <div class="w-px h-8 bg-[#7f9ba6]"></div>
        <button class="w-[84px] flex flex-col items-center"><svg width="30" height="32" viewBox="0 0 30 32"><use href="#doc" x="0" y="2" width="16" height="19"/><use href="#doc" x="3" y="5" width="16" height="19"/><use href="#doc" x="6" y="8" width="16" height="18"/><rect x="13" y="15" width="16" height="16" rx="2" fill="#1b7fc4"/><path d="M18 19c-2 0-.5 4-2.500 4 2 0 .5 4 2.500 4M24 19c2 0 .5 4 2.500 4-2 0-.5 4-2.500 4M19 20.500h4l-4 5h4l-4-5M19 25.500v-5M23 25.500v-5" fill="none" stroke="#fff"/></svg>Aggiungere</button>
      </div>
      <div class="flex-1 min-h-0 flex pl-[10px]">
        <div class="w-[358px] rounded-t border border-[#8aa3ae] bg-white"></div>
        <div class="ml-[10px] w-2 rounded border border-[#6f8d99] bg-linear-to-r from-[#9fc0ce] to-[#c5dce6]"></div>
      </div>
      <div class="h-7 shrink-0 pt-[5px] text-center font-bold">EUR/USD Mini (-) - 30 Minuti</div>
      <div class="flex shrink-0 pb-[11px] pl-[136px]">
        <button class="w-[164px] h-[69px] flex flex-col items-center pt-1 rounded border border-[#7b8f98] bg-linear-to-b from-white to-[#e8e8e8]">ProBacktesta il mio sistema
          <svg class="mt-1" width="106" height="44" viewBox="0 0 106 44"><use href="#equity" width="106" height="42"/><g fill="#333"><use href="#aDown" x="61" y="4" width="5" height="6"/><use href="#aDown" x="80" y="0" width="5" height="6"/></g><g fill="#fff" stroke="#777"><use href="#aUp" x="54" y="22" width="7" height="8"/><use href="#aUp" x="73" y="18" width="7" height="8"/></g><rect x=".5" y=".5" width="37" height="41" rx="1.500" fill="#fff" stroke="#1350a0"/><path d="M1 1h36v5H1z" fill="#1d6cc4"/><path d="M13.500 1v40M25.500 1v40" stroke="#a9c0d8"/><path d="M7 6v35" stroke="#8b8b8b" stroke-width="9" stroke-dasharray="1 2"/><path d="M19.500 6v35" stroke="#8b8b8b" stroke-width="8" stroke-dasharray="1 2"/><path d="M31.500 6v35" stroke="#8b8b8b" stroke-width="8" stroke-dasharray="1 2"/></svg></button>
        <button class="ml-[137px] w-[194px] h-[69px] flex flex-col items-center pt-1 rounded border border-[#7b8f98] bg-linear-to-b from-[#ececec] to-[#d2d2d2]">Preparati per il trading automatico
          <svg class="mt-1" width="106" height="44" viewBox="0 0 106 44"><use href="#equity" width="106" height="42"/><path d="M40 13.500h17" stroke="#888"/><path d="M57 13.500h45" stroke="#12308f" stroke-width="1.300"/><g fill="#e03a40"><use href="#aDown" x="60" y="4" width="5" height="6"/><use href="#aDown" x="79" y="0" width="5" height="6"/></g><g fill="#18b020"><use href="#aUp" x="54" y="22" width="6" height="7"/><use href="#aUp" x="73" y="19" width="6" height="7"/></g><path d="M12 3C7 3 7 7 7 12h3l-5 6-5-6h3C3 5 6 2 12 3z" fill="#ef5a5a" stroke="#b52a2a" stroke-width=".6"/><path d="M32 18c5 0 5-4 5-8h-3l5-6 4 6h-2c0 7-3 10-9 8z" fill="#22b030" stroke="#13731c" stroke-width=".6"/><g fill="#fff" stroke="#1a55b0"><circle cx="17" cy="11" r="4" stroke-width="3"/><circle cx="17" cy="11" r="6" fill="none" stroke-width="1.800" stroke-dasharray="1.800 2"/><circle cx="27" cy="5" r="2.700" stroke-width="2"/><circle cx="27" cy="5" r="4" fill="none" stroke-dasharray="1.500 1.500"/><circle cx="27" cy="17" r="2.700" stroke-width="2"/><circle cx="27" cy="17" r="4" fill="none" stroke-dasharray="1.500 1.500"/></g></svg></button>
      </div>
    </div>
  </div>
</section>

<section role="dialog" aria-labelledby="dlg2" class="absolute left-[422px] top-[315px] w-[490px] h-[225px] flex flex-col bg-[#5f97ee] border border-[#2a62c4] text-black">
  <header class="h-6 shrink-0 flex items-center pl-[3px] pr-1.5 bg-linear-to-b from-[#78aefb] to-[#5c93ec] text-white">
    <svg class="w-4 h-[18px] mr-0.5" aria-hidden="true"><use href="#candles"/></svg>
    <h2 id="dlg2" class="font-bold">Modifica il codice per il trading automatico</h2>
    <button class="ml-auto w-[10px] h-[10px]" aria-label="Chiudi"><svg viewBox="0 0 10 10"><path d="m1 1 8 8m0-8L1 9" stroke="#fff" stroke-width="2.200"/></svg></button>
  </header>
  <div class="flex-1 min-h-0 mx-[3px] mb-[3px] p-[10px] bg-[#9bb9c6] border-t border-[#2f66c6] flex">
    <div class="flex-1 flex rounded border border-[#6f8d99] bg-[#cddbe1] pl-[26px] pr-6">
      <svg class="mt-[29px] shrink-0" width="88" height="82" viewBox="0 0 88 82" role="img" aria-label="Attenzione"><path d="M38.500 5c2-5 9-5 11.500 0l36 69c2 4 0 7-4 7H6c-4 0-6-3-4-7z" fill="#fff" stroke="#b5c0c4"/><path d="M44 1.500c-2.500 0-4.500 1.500-5.500 3.500L2.500 74c-2 4 0 6 3.500 6h38z" fill="#e9eced"/><path d="M44 14v57.500H12z" fill="#ecbf16"/><path d="M44 14v57.500h32z" fill="#ffdb00"/><path d="M40 31c0-4.500 8-4.500 8 0l-1.500 22c-.3 3-4.700 3-5 0z" fill="#fff"/><circle cx="44" cy="62.500" r="4" fill="#fff"/></svg>
      <div class="ml-6 flex-1 flex flex-col pt-[22px]">
        <p class="font-bold text-justify">Le seguenti modifiche sono state applicate prima dell'invio del codice a ProOrder:</p>
        <p class="mt-[14px] text-justify">- Questo sistema di trading non puo' essere usato per il trading automatico perché il suo codice non é accessibile.</p>
        <div class="mt-6 pl-[10px] flex flex-col items-center">
          <button class="w-[116px] h-6 rounded-[3px] border-2 border-[#5b8be0] bg-linear-to-b from-white to-[#ececec] outline-1 outline-dotted -outline-offset-3 outline-[#3c5fa8]">Modifica il codice</button>
          <span class="mt-0.5">Tasto "Enter/Spazio"</span>
        </div>
      </div>
    </div>
  </div>
</section>

<script>
  // x, body top, body bottom, wick top, wick bottom, rising
  const bars = [
    [15,592,617,589,624,0],[34,616,630,612,637,0],[52,591,630,584,637,1],[70,590,596,579,600,0],[89,596,598,590,613,0],
    [107,590,598,588,605,1],[126,561,591,544,593,1],[144,504,560,502,566,1],[162,505,505,497,520,1],[181,498,505,466,509,1],
    [199,498,553,496,557,0],[218,542,552,522,555,1],[236,534,542,532,563,1],[255,534,541,514,549,0],[273,541,546,526,554,0],
    [291,545,568,540,581,0],[310,569,603,560,609,0],[328,578,602,575,605,1],[347,579,585,577,595,0],[365,577,584,573,597,1],
    [383,577,592,576,596,0],[402,592,603,590,606,0]];
  const bandHigh = '5,631 34,629 52,624 71,621 107,612.5 126,606.5 144,595 181,574.5 218,565 236,558.5 274,550.5 291,548.3 347,548.3 370,547.5 402,547.3';
  const bandLow = '5,662 34,659.5 52,657 71,652.5 90,649 107,645.5 144,635.5 181,624.5 218,612.5 236,604.5 274,590.5 291,586.3 328,586.3 366,584.5 402,581';
  const bandMid = '5,647 34,644.5 71,637 107,630.5 126,623.5 144,613.5 181,600 218,588.5 236,582 274,570.5 291,567.5 347,567.3 383,565.5 402,564';
  const average = '5,600 15,607 34,618 52,604 71,600.5 90,599 107,596 126,578.5 144,541 162,523.5 181,510.5 199,532 218,537.5 236,536.5 255,538 274,542.5 291,555 310,579 328,579.5 347,582 366,579.5 383,586 402,594';
  let s = `<polygon points="${bandHigh} ${bandLow.split(' ').reverse().join(' ')}" fill="#9b87c9" fill-opacity=".75"/>`;
  for (const [x, t, b, h, l, up] of bars)
    s += `<path d="M${x + .5} ${h}V${l}" stroke="#26343b"/><rect x="${x - 7.5}" y="${t + .5}" width="16" height="${Math.max(b - t, .1)}" fill="url(#${up ? 'gGreen' : 'gRed'})" stroke="#26343b"/>`;
  s += `<g fill="none"><polyline points="${bandHigh}" stroke="#7a3fa8"/><polyline points="${bandLow}" stroke="#7a3fa8"/><polyline points="${bandMid}" stroke="#7a3fa8" stroke-dasharray="11 8"/><polyline points="${average}" stroke="#2850cc" stroke-width="2"/></g>`;
  document.getElementById('price').innerHTML = s;
</script>
</body>
</html>
